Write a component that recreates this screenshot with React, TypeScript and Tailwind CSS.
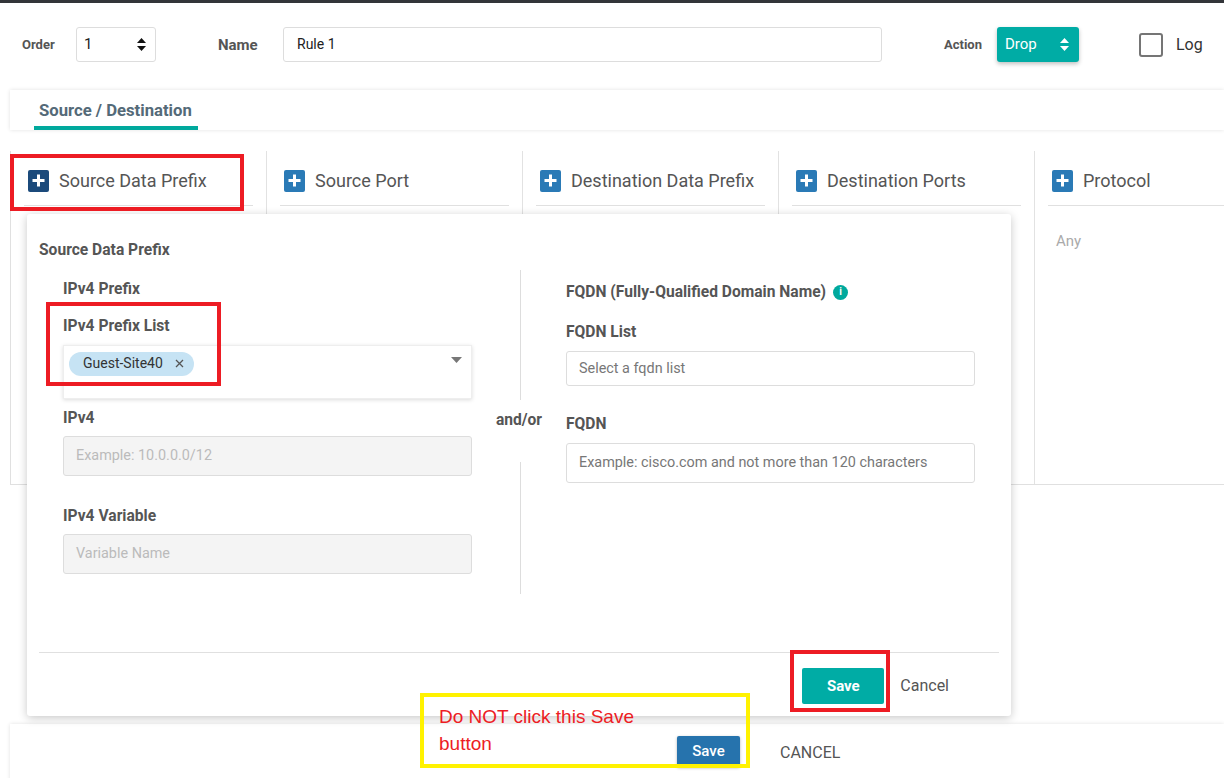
import { type FC } from 'react'

// Petit icône "+" des en-têtes de colonnes
const PlusBox: FC<{ dark?: boolean }> = ({ dark }) => (
  <span
    className={`flex h-[22px] w-[21px] items-center justify-center rounded-[2px] ${
      dark ? 'bg-[#1b4a7b]' : 'bg-[#2a7ab6]'
    }`}
  >
    <svg width="13" height="13" viewBox="0 0 13 13">
      <rect x="5" y="0.5" width="3" height="12" fill="#fff" />
      <rect x="0.5" y="5" width="12" height="3" fill="#fff" />
    </svg>
  </span>
)

const SortArrows: FC<{ color: string }> = ({ color }) => (
  <svg width="9" height="13" viewBox="0 0 9 13">
    <path d="M4.5 0 L9 5 L0 5 Z" fill={color} />
    <path d="M4.5 13 L9 8 L0 8 Z" fill={color} />
  </svg>
)

const columns = [
  { title: 'Source Data Prefix', dark: true },
  { title: 'Source Port' },
  { title: 'Destination Data Prefix' },
  { title: 'Destination Ports' },
]

const Label: FC<{ children: React.ReactNode; className?: string }> = ({
  children,
  className = '',
}) => (
  <div className={`text-[15.6px] font-bold leading-[18px] text-[#555] ${className}`}>
    {children}
  </div>
)

export default function App() {
  return (
    <div className="relative h-[778px] w-[1224px] overflow-hidden bg-white font-['Roboto',sans-serif]">
      <div className="h-[3px] bg-[#333539]" />

      {/* Ligne du haut */}
      <div className="mt-6 flex h-[35px] items-center">
        <span className="ml-[22px] w-[54px] text-[13px] font-bold text-[#555]">Order</span>
        <div className="flex h-[35px] w-[80px] items-center justify-between rounded-[3px] border border-[#ddd] pl-[7px] pr-[9px] text-[15px] text-[#222]">
          <span>1</span>
          <SortArrows color="#111" />
        </div>
        <span className="ml-[62px] mt-[2px] w-[65px] text-[15px] font-bold text-[#555]">Name</span>
        <div className="flex h-[35px] w-[599px] items-center rounded-[3px] border border-[#ddd] pl-[13px] text-[14px] text-[#222]">
          Rule 1
        </div>
        <span className="ml-[62px] w-[53px] text-[13px] font-bold text-[#555]">Action</span>
        <div className="flex h-[35px] w-[82px] items-center justify-between rounded-[3px] bg-[#00aca5] pl-2 pr-[10px] text-[15px] text-white shadow-[0_2px_4px_rgba(0,0,0,0.25)]">
          <span>Drop</span>
          <SortArrows color="#fff" />
        </div>
        <span className="ml-[60px] h-6 w-6 rounded-[3px] border-2 border-[#757575]" />
        <span className="ml-[13px] text-[16px] text-[#333]">Log</span>
      </div>

      {/* Onglet */}
      <div className="ml-[10px] mt-[28px] flex h-[40px] items-end bg-white pl-[24px] shadow-[0_0_4px_rgba(0,0,0,0.12)]">
        <div className="flex h-full w-[164px] items-center border-b-4 border-[#00a99d] pl-[5px] pt-[6px] text-[16.7px] font-bold text-[#546a78]">
          Source / Destination
        </div>
      </div>

      {/* Colonnes */}
      <div className="ml-[10px] mt-[21px] flex h-[334px] border-b border-l border-[#e0e0e0]">
        {columns.map((c) => (
          <div key={c.title} className="w-[256px] border-r border-[#e2e2e2] px-[13px]">
            <div className="flex h-[55px] items-center gap-[10px] border-b border-[#e0e0e0] pl-1 pt-[5px]">
              <PlusBox dark={c.dark} />
              <span className="text-[18px] text-[#555]">{c.title}</span>
            </div>
          </div>
        ))}
        <div className="flex-1 pl-[13px]">
          <div className="flex h-[55px] items-center gap-[10px] border-b border-[#e0e0e0] pl-1 pt-[5px]">
            <PlusBox />
            <span className="text-[18px] text-[#555]">Protocol</span>
          </div>
          <div className="mt-6 pl-2 text-[15px] text-[#aaa]">Any</div>
        </div>
      </div>

      {/* Barre du bas */}
      <div className="ml-[10px] mt-[239px] flex h-[60px] items-start bg-white pl-[667px] pt-3 shadow-[0_0_4px_rgba(0,0,0,0.12)]">
        <button className="h-[31px] w-[63px] rounded-[2px] bg-[#2673ad] text-[15px] font-medium text-white shadow-[0_1px_3px_rgba(0,0,0,0.3)]">
          Save
        </button>
        <span className="ml-[40px] mt-[5px] text-[16px] text-[#555]">CANCEL</span>
      </div>

      {/* Popover Source Data Prefix */}
      <div className="absolute left-[27px] top-[214px] flex h-[502px] w-[984px] flex-col rounded-[3px] bg-white shadow-[0_2px_10px_rgba(0,0,0,0.22)]">
        <Label className="pl-3 pt-[27px]">Source Data Prefix</Label>

        <div className="mt-[11px] flex">
          {/* IPv4 */}
          <div className="ml-[36px] w-[409px] pt-[10px]">
            <Label>IPv4 Prefix</Label>
            <Label className="mt-[19px]">IPv4 Prefix List</Label>
            <div className="relative mt-[10px] h-[54px] border border-[#eee] pl-[5px] pt-[5px] shadow-[0_1px_4px_rgba(0,0,0,0.14)]">
              <span className="inline-flex h-6 items-center gap-[12px] rounded-full bg-[#c6e3f4] pl-[14px] pr-[10px] text-[14px] text-[#333]">
                Guest-Site40
                <svg width="9" height="9" viewBox="0 0 9 9">
                  <path d="M1 1 L8 8 M8 1 L1 8" stroke="#555" strokeWidth="1.3" />
                </svg>
              </span>
              <svg className="absolute right-[9px] top-[11px]" width="11" height="6" viewBox="0 0 11 6">
                <path d="M0 0 L11 0 L5.5 6 Z" fill="#777" />
              </svg>
            </div>
            <Label className="mt-[10px]">IPv4</Label>
            <div className="mt-[9px] flex h-[40px] items-center rounded-[3px] border border-[#ddd] bg-[#f4f4f4] pl-[12px] text-[14.4px] text-[#bbb]">
              Example: 10.0.0.0/12
            </div>
            <Label className="mt-[31px]">IPv4 Variable</Label>
            <div className="mt-[9px] flex h-[40px] items-center rounded-[3px] border border-[#ddd] bg-[#f4f4f4] pl-[12px] text-[14.4px] text-[#bbb]">
              Variable Name
            </div>
          </div>

          {/* Séparateur and/or */}
          <div className="flex w-[94px] flex-col items-center">
            <div className="ml-[3px] h-[130px] w-px bg-[#ddd]" />
            <Label className="mt-[11px]">and/or</Label>
            <div className="ml-[3px] mt-[33px] h-[132px] w-px bg-[#ddd]" />
          </div>

          {/* FQDN */}
          <div className="w-[409px] pt-[13px]">
            <Label className="flex items-center gap-[7px]">
              FQDN (Fully-Qualified Domain Name)
              <span className="flex h-[15px] w-[15px] items-center justify-center rounded-full bg-[#00a99d] text-[10px] font-bold leading-none text-white">
                i
              </span>
            </Label>
            <Label className="mt-[22px]">FQDN List</Label>
            <div className="mt-[10px] flex h-[35px] items-center rounded-[3px] border border-[#ddd] pl-[12px] text-[14.4px] text-[#777]">
              Select a fqdn list
            </div>
            <Label className="mt-[29px]">FQDN</Label>
            <div className="mt-[10px] flex h-[40px] items-center rounded-[3px] border border-[#ddd] pl-[12px] text-[14.4px] text-[#777]">
              Example: cisco.com and not more than 120 characters
            </div>
          </div>
        </div>

        <div className="mx-3 mt-auto border-t border-[#e0e0e0]" />
        <div className="flex items-center justify-end pb-3 pr-[62px] pt-[15px]">
          <button className="h-9 w-[82px] rounded-[2px] bg-[#00aca5] text-[15px] font-bold text-white">
            Save
          </button>
          <span className="ml-4 text-[16px] text-[#555]">Cancel</span>
        </div>
      </div>

      {/* Annotations */}
      <div className="absolute left-[10px] top-[154px] h-[57px] w-[234px] border-4 border-[#ed1c24]" />
      <div className="absolute left-[46px] top-[302px] h-[84px] w-[175px] border-4 border-[#ed1c24]" />
      <div className="absolute left-[790px] top-[650px] h-[62px] w-[100px] border-4 border-[#ed1c24]" />
      <div className="absolute left-[420px] top-[693px] h-[75px] w-[330px] border-4 border-[#fff200] pl-[15px] pt-[6px] font-['Liberation_Sans',sans-serif] text-[19px] leading-[27px] text-[#ed1c24]">
        Do NOT click this Save
        <br />
        button
      </div>
    </div>
  )
}
